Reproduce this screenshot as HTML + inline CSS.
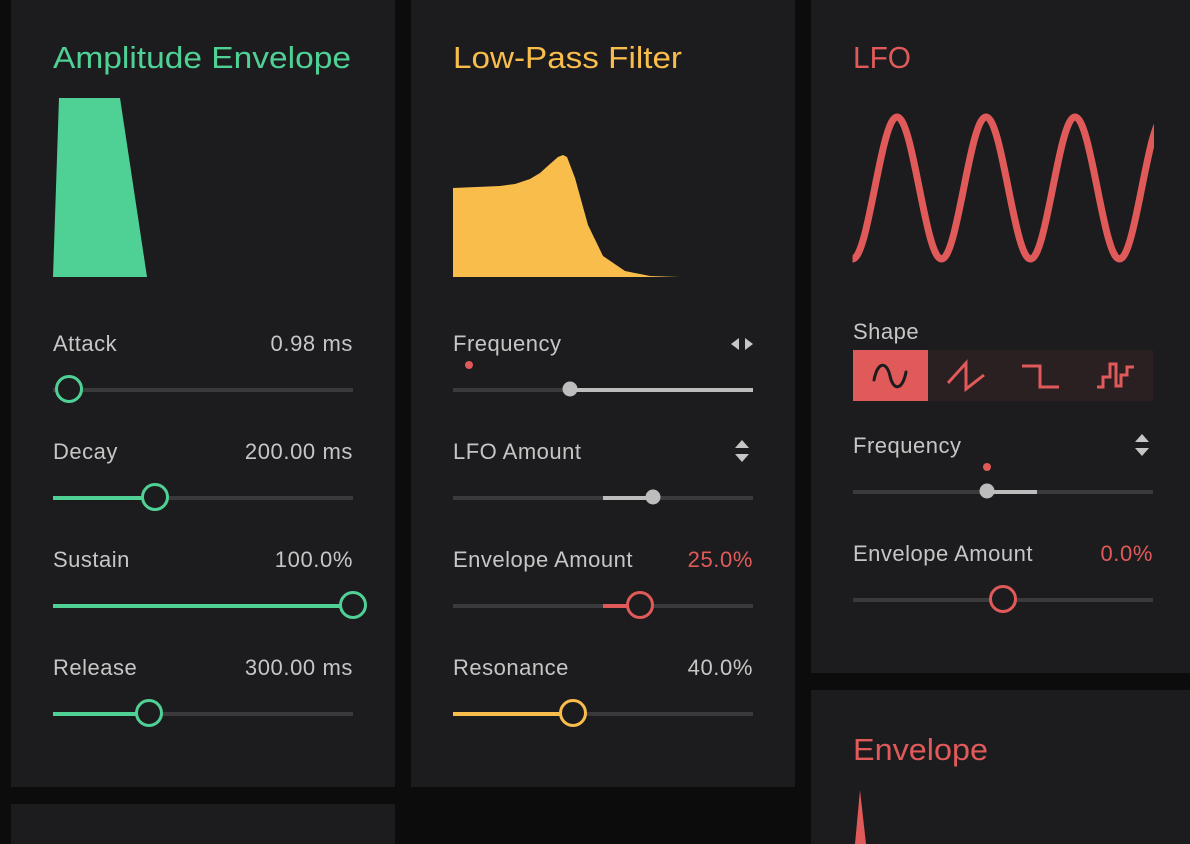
<!DOCTYPE html>
<html><head><meta charset="utf-8"><style>
html,body{margin:0;padding:0;background:#0c0c0c;width:1190px;height:844px;overflow:hidden}
svg{display:block}
text{font-family:"Liberation Sans",sans-serif}
.t{font-size:31px}
.l{font-size:22px;fill:#c6c6c6;letter-spacing:0.5px}
.v{font-size:22px;fill:#c6c6c6;text-anchor:end;letter-spacing:0.6px}
</style></head><body>
<svg width="1190" height="844" viewBox="0 0 1190 844" xmlns="http://www.w3.org/2000/svg">
<defs><clipPath id="c3"><rect x="848" y="90" width="306" height="200"/></clipPath></defs>
<rect width="1190" height="844" fill="#0c0c0c"/>
<rect x="11" y="0" width="384" height="787" fill="#1c1c1e"/>
<rect x="411" y="0" width="384" height="787" fill="#1c1c1e"/>
<rect x="811" y="0" width="379" height="673" fill="#1c1c1e"/>
<rect x="811" y="690" width="379" height="154" fill="#1c1c1e"/>
<rect x="11" y="804" width="384" height="40" fill="#1c1c1e"/>

<!-- Panel 1 -->
<text class="t" x="53" y="68" fill="#4fd195" textLength="298" lengthAdjust="spacingAndGlyphs">Amplitude Envelope</text>
<polygon points="53,277 59,98 120,98 147,277" fill="#4fd195"/>
<g>
<text class="l" x="53" y="351">Attack</text><text class="v" x="353" y="351">0.98 ms</text>
<line x1="53" y1="390" x2="353" y2="390" stroke="#3a3a3c" stroke-width="4"/>
<circle cx="69" cy="389" r="12.5" fill="#1c1c1e" stroke="#4fd195" stroke-width="3"/>
<text class="l" x="53" y="459">Decay</text><text class="v" x="353" y="459">200.00 ms</text>
<line x1="53" y1="498" x2="353" y2="498" stroke="#3a3a3c" stroke-width="4"/>
<line x1="53" y1="498" x2="155" y2="498" stroke="#4fd195" stroke-width="4"/>
<circle cx="155" cy="497" r="12.5" fill="#1c1c1e" stroke="#4fd195" stroke-width="3"/>
<text class="l" x="53" y="567">Sustain</text><text class="v" x="353" y="567">100.0%</text>
<line x1="53" y1="606" x2="353" y2="606" stroke="#4fd195" stroke-width="4"/>
<circle cx="353" cy="605" r="12.5" fill="#1c1c1e" stroke="#4fd195" stroke-width="3"/>
<text class="l" x="53" y="675">Release</text><text class="v" x="353" y="675">300.00 ms</text>
<line x1="53" y1="714" x2="353" y2="714" stroke="#3a3a3c" stroke-width="4"/>
<line x1="53" y1="714" x2="149" y2="714" stroke="#4fd195" stroke-width="4"/>
<circle cx="149" cy="713" r="12.5" fill="#1c1c1e" stroke="#4fd195" stroke-width="3"/>

<!-- Panel 2 -->
<text class="t" x="453" y="68" fill="#f9bd4b" textLength="229" lengthAdjust="spacingAndGlyphs">Low-Pass Filter</text>
<path d="M453,188 L500,186 L515,184 L530,179 L540,173 L550,164 L558,157 L563,155 L567,157 L575,178 L588,225 L603,256 L625,271 L650,276 L680,277 L753,277 L453,277 Z" fill="#f9bd4b"/>
<text class="l" x="453" y="351">Frequency</text>
<polygon points="731,344 739,338 739,350" fill="#c6c6c6"/><polygon points="745,338 753,344 745,350" fill="#c6c6c6"/>
<circle cx="469" cy="365" r="4" fill="#e05a5a"/>
<line x1="453" y1="390" x2="753" y2="390" stroke="#3a3a3c" stroke-width="4"/>
<line x1="570" y1="390" x2="753" y2="390" stroke="#bdbdbd" stroke-width="4"/>
<circle cx="570" cy="389" r="7.5" fill="#bdbdbd"/>
<text class="l" x="453" y="459">LFO Amount</text>
<polygon points="742,440 749,448 735,448" fill="#c6c6c6"/><polygon points="735,454 749,454 742,462" fill="#c6c6c6"/>
<line x1="453" y1="498" x2="753" y2="498" stroke="#3a3a3c" stroke-width="4"/>
<line x1="603" y1="498" x2="653" y2="498" stroke="#bdbdbd" stroke-width="4"/>
<circle cx="653" cy="497" r="7.5" fill="#bdbdbd"/>
<text class="l" x="453" y="567">Envelope Amount</text><text class="v" x="753" y="567" style="fill:#e05a5a">25.0%</text>
<line x1="453" y1="606" x2="753" y2="606" stroke="#3a3a3c" stroke-width="4"/>
<line x1="603" y1="606" x2="640" y2="606" stroke="#e05a5a" stroke-width="4"/>
<circle cx="640" cy="605" r="12.5" fill="#1c1c1e" stroke="#e05a5a" stroke-width="3"/>
<text class="l" x="453" y="675">Resonance</text><text class="v" x="753" y="675">40.0%</text>
<line x1="453" y1="714" x2="753" y2="714" stroke="#3a3a3c" stroke-width="4"/>
<line x1="453" y1="714" x2="573" y2="714" stroke="#f9bd4b" stroke-width="4"/>
<circle cx="573" cy="713" r="12.5" fill="#1c1c1e" stroke="#f9bd4b" stroke-width="3"/>

<!-- Panel 3 -->
<text class="t" x="853" y="68" fill="#e05a5a" textLength="58" lengthAdjust="spacingAndGlyphs">LFO</text>
<g clip-path="url(#c3)">
<path fill="none" stroke="#e05a5a" stroke-width="7" d="M852.5,259
c8.05,0 14.99,-34.6 22.25,-71 c7.26,-36.4 14.2,-71 22.25,-71 c8.05,0 14.99,34.6 22.25,71 c7.26,36.4 14.2,71 22.25,71
c8.05,0 14.99,-34.6 22.25,-71 c7.26,-36.4 14.2,-71 22.25,-71 c8.05,0 14.99,34.6 22.25,71 c7.26,36.4 14.2,71 22.25,71
c8.05,0 14.99,-34.6 22.25,-71 c7.26,-36.4 14.2,-71 22.25,-71 c8.05,0 14.99,34.6 22.25,71 c7.26,36.4 14.2,71 22.25,71
c8.05,0 14.99,-34.6 22.25,-71 c7.26,-36.4 14.2,-71 22.25,-71"/>
</g>
<text class="l" x="853" y="339">Shape</text>
<rect x="853" y="350" width="300" height="51" fill="#2a1f21"/>
<rect x="853" y="350" width="75" height="51" fill="#e05a5a"/>
<path d="M874,380 C878,360 887,362 890,376 C893,390 902,392 906,372" fill="none" stroke="#1c1c1e" stroke-width="3" stroke-linecap="round"/>
<path d="M948,383 L966,363 L966,389 L984,375" fill="none" stroke="#e05a5a" stroke-width="3"/>
<path d="M1022,366 L1040,366 L1040,387 L1059,387" fill="none" stroke="#e05a5a" stroke-width="3"/>
<path d="M1097,387 L1103,387 L1103,377 L1110,377 L1110,364 L1116,364 L1116,386 L1121,386 L1121,375 L1127,375 L1127,367 L1134,367" fill="none" stroke="#e05a5a" stroke-width="3"/>
<text class="l" x="853" y="453">Frequency</text>
<polygon points="1142,434 1149,442 1135,442" fill="#c6c6c6"/><polygon points="1135,448 1149,448 1142,456" fill="#c6c6c6"/>
<circle cx="987" cy="467" r="4" fill="#e05a5a"/>
<line x1="853" y1="492" x2="1153" y2="492" stroke="#3a3a3c" stroke-width="4"/>
<line x1="987" y1="492" x2="1037" y2="492" stroke="#bdbdbd" stroke-width="4"/>
<circle cx="987" cy="491" r="7.5" fill="#bdbdbd"/>
<text class="l" x="853" y="561">Envelope Amount</text><text class="v" x="1153" y="561" style="fill:#e05a5a">0.0%</text>
<line x1="853" y1="600" x2="1153" y2="600" stroke="#3a3a3c" stroke-width="4"/>
<circle cx="1003" cy="599" r="12.5" fill="#1c1c1e" stroke="#e05a5a" stroke-width="3"/>
</g>

<!-- Panel 4 -->
<text class="t" x="853" y="760" fill="#e05a5a" textLength="135" lengthAdjust="spacingAndGlyphs">Envelope</text>
<polygon points="855,844 860,790 866,844" fill="#e05a5a"/>
</svg>
</body></html>
